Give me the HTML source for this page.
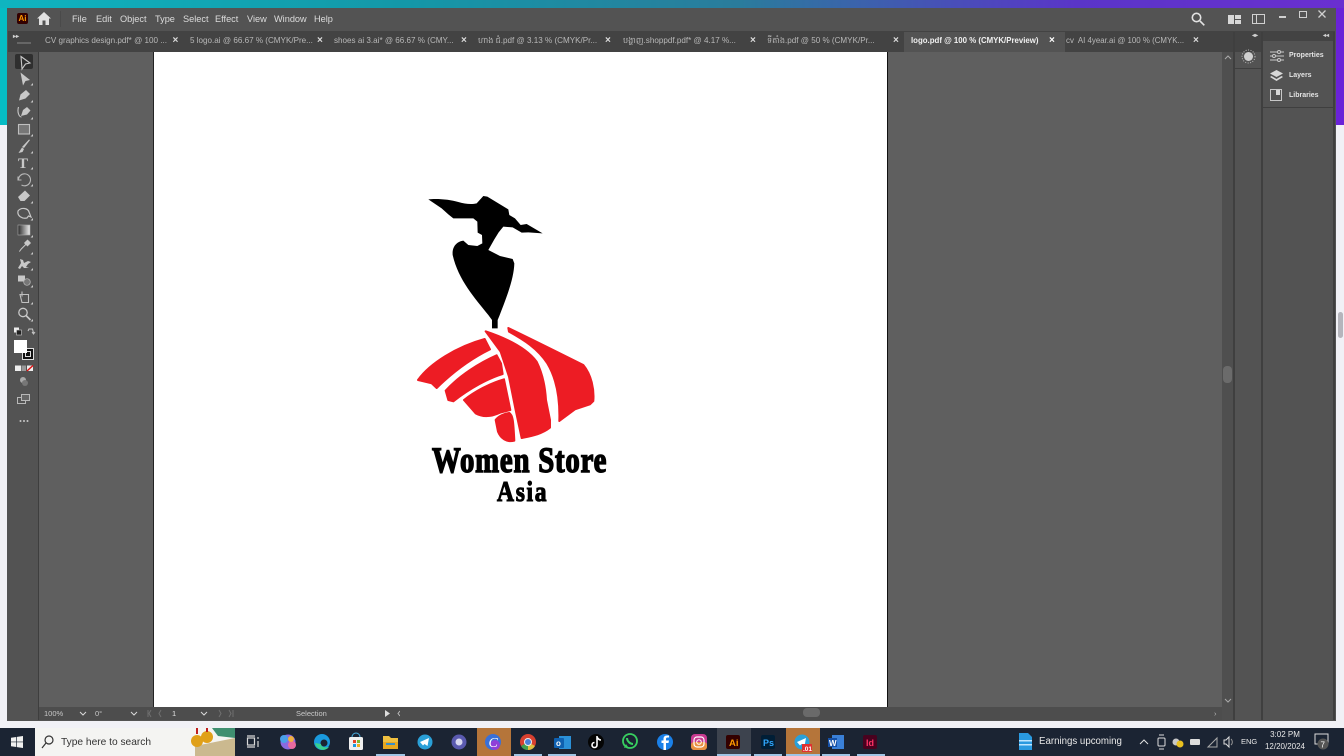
<!DOCTYPE html>
<html><head><meta charset="utf-8">
<style>
html,body{margin:0;padding:0;width:1344px;height:756px;overflow:hidden;background:#f1f1f6;font-family:"Liberation Sans","Noto Sans CJK SC",sans-serif}
.a{position:absolute}
.menu{position:absolute;top:13px;font-size:9.2px;color:#dcdcdc;line-height:12px}
.tab{position:absolute;top:35px;font-size:8.1px;color:#b8b8b8;line-height:12px;white-space:nowrap}
.x{position:absolute;top:35px;font-size:10px;color:#dcdcdc;line-height:12px;font-weight:bold}
.pl{position:absolute;left:1289px;font-size:7px;font-weight:bold;color:#e4e4e4;line-height:10px}
.st{position:absolute;top:709px;font-size:7.5px;color:#c8c8c8;line-height:10px}
</style></head><body>
<div class="a" style="left:0;top:0;width:1344px;height:8px;background:linear-gradient(90deg,#0fb4c0 0,#1498a8 30%,#2a7c9c 55%,#5a35c8 80%,#6a2fd0 100%)"></div>
<div class="a" style="left:0;top:8px;width:8px;height:117px;background:#06bcc4"></div>
<div class="a" style="left:1336px;top:8px;width:8px;height:117px;background:#6a22d8"></div>
<div class="a" style="left:1338px;top:312px;width:5px;height:26px;background:#b5b5bc;border-radius:3px"></div>

<!-- window -->
<div class="a" style="left:7px;top:8px;width:1329px;height:713px;background:#535353"></div>
<div class="a" style="left:8px;top:31px;width:1327px;height:21px;background:#434343"></div>
<div class="a" style="left:904px;top:32px;width:161px;height:20px;background:#535353"></div>
<!-- canvas -->
<div class="a" style="left:39px;top:52px;width:1183px;height:655px;background:#5f5f5f"></div>
<div class="a" style="left:153px;top:52px;width:735px;height:655px;background:#fff;border-left:1px solid #222;border-right:1px solid #111;box-sizing:border-box"></div>
<div class="a" style="left:38px;top:52px;width:1px;height:668px;background:#3e3e3e"></div>
<div class="a" style="left:1222px;top:52px;width:12px;height:668px;background:#4f4f4f"></div>
<div class="a" style="left:1223px;top:366px;width:9px;height:17px;background:#6b6b6b;border-radius:4px"></div>
<div class="a" style="left:1233px;top:32px;width:2px;height:688px;background:#3f3f3f"></div>
<div class="a" style="left:1261px;top:32px;width:2px;height:688px;background:#3f3f3f"></div>
<div class="a" style="left:1235px;top:32px;width:26px;height:9px;background:#434343"></div>
<div class="a" style="left:1263px;top:41px;width:70px;height:65px;background:#535353"></div>
<div class="a" style="left:1263px;top:107px;width:70px;height:1px;background:#3f3f3f"></div>
<div class="a" style="left:1235px;top:68px;width:26px;height:1px;background:#3f3f3f"></div>
<div class="a" style="left:1333px;top:32px;width:2px;height:688px;background:#3f3f3f"></div>

<!-- title bar -->
<div class="a" style="left:17px;top:13px;width:11px;height:11px;background:#330000;border-radius:2px;color:#ff9a00;font-size:8px;font-weight:bold;line-height:11px;text-align:center">Ai</div>
<svg class="a" style="left:37px;top:12px" width="14" height="13" viewBox="0 0 14 13"><path d="M7 0L0 6.500h2V13h3.500V8.500h3V13H12V6.500h2z" fill="#e0e0e0"/></svg>
<div class="a" style="left:60px;top:11px;width:1px;height:16px;background:#4a4a4a"></div>
<div class="menu" style="left:72px">File</div>
<div class="menu" style="left:96px">Edit</div>
<div class="menu" style="left:120px">Object</div>
<div class="menu" style="left:155px">Type</div>
<div class="menu" style="left:183px">Select</div>
<div class="menu" style="left:215px">Effect</div>
<div class="menu" style="left:247px">View</div>
<div class="menu" style="left:274px">Window</div>
<div class="menu" style="left:314px">Help</div>
<svg class="a" style="left:1191px;top:12px" width="14" height="14" viewBox="0 0 14 14" fill="none" stroke="#e2e2e2" stroke-width="1.600"><circle cx="5.500" cy="5.500" r="4.200"/><path d="M9 9l4.300 4.300"/></svg>
<svg class="a" style="left:1228px;top:15px" width="13" height="9"><rect x="0" y="0" width="6" height="9" fill="#d8d8d8"/><rect x="7" y="0" width="6" height="4" fill="#d8d8d8"/><rect x="7" y="5" width="6" height="4" fill="#d8d8d8"/></svg>
<svg class="a" style="left:1252px;top:14px" width="13" height="10" fill="none" stroke="#d0d0d0"><rect x=".5" y=".5" width="12" height="9"/><path d="M4.500 0v10"/></svg>
<div class="a" style="left:1279px;top:16px;width:7px;height:1.500px;background:#cfcfcf"></div>
<div class="a" style="left:1299px;top:11px;width:6px;height:5px;border:1.300px solid #cfcfcf"></div>
<svg class="a" style="left:1318px;top:10px" width="8" height="8" stroke="#cfcfcf" stroke-width="1.300"><path d="M.5.5l7 7M7.500.5l-7 7"/></svg>

<!-- tabs -->
<div class="a" style="left:13px;top:34px;color:#cfcfcf;font-size:6px;line-height:6px;font-weight:bold">▸▸</div>
<div class="tab" style="left:45px">CV graphics design.pdf* @ 100 ...</div><div class="x" style="left:172.500px">×</div>
<div class="tab" style="left:190px">5 logo.ai @ 66.67 % (CMYK/Pre...</div><div class="x" style="left:317px">×</div>
<div class="tab" style="left:334px">shoes ai 3.ai* @ 66.67 % (CMY...</div><div class="x" style="left:461px">×</div>
<div class="tab" style="left:478px">ហាង ជំ.pdf @ 3.13 % (CMYK/Pr...</div><div class="x" style="left:605px">×</div>
<div class="tab" style="left:623px">បង្ហាញ.shoppdf.pdf* @ 4.17 %...</div><div class="x" style="left:750px">×</div>
<div class="tab" style="left:767px;width:120px;overflow:hidden">ទីតាំង.pdf @ 50 % (CMYK/Pr...</div><div class="x" style="left:893px">×</div>
<div class="tab" style="left:911px;color:#f0f0f0;font-weight:bold;font-size:7.850px">logo.pdf @ 100 % (CMYK/Preview)</div><div class="x" style="left:1049px;color:#fff">×</div>
<div class="tab" style="left:1066px;font-size:7.900px">cv&nbsp; AI 4year.ai @ 100 % (CMYK...</div><div class="x" style="left:1193px">×</div>

<!-- tools -->
<div class="a" style="left:15px;top:54px;width:18px;height:15px;background:#2f2f2f;border-radius:2px"></div>
<svg class="a" style="left:0;top:0" width="40" height="430" viewBox="0 0 40 430">
<defs><linearGradient id="gr" x1="0" x2="1"><stop offset="0" stop-color="#2a2a2a"/><stop offset="1" stop-color="#eee"/></linearGradient></defs>
<rect x="17" y="42" width="14" height="2" fill="#666"/>
<g fill="#c8c8c8">
<path d="M21 56.500L30 63L25.500 64L22 69Z" fill="none" stroke="#c8c8c8" stroke-width="1.100"/>
<path d="M20.500 72.500L30 80L25.500 81L23 85.500Z"/>
<path d="M19 100.500L20.500 94.500L26 90L30 94L25.500 98.500Z"/>
<path d="M21 116L23 110L27 107L30.500 110.500L27 114.500Z"/><path d="M18.500 107C17 112 19 117 21.500 117" fill="none" stroke="#c8c8c8" stroke-width="1.100"/>
<rect x="18.500" y="124.500" width="11" height="9.500" fill="#777" stroke="#c0c0c0" stroke-width="1.100"/>
<path d="M30 140L24 148L22 147L29 139.500ZM22 147.500L24 149L22.500 152L18.500 153Z"/>
<text x="18" y="168" font-family="Liberation Serif,serif" font-size="15" font-weight="bold">T</text>
<path d="M18 176.500v3.500h3.500M18.500 180a6 6 0 1 1 3 5" fill="none" stroke="#b8b8b8" stroke-width="1.100"/>
<path d="M18 197L25 190.500L30 195.500L24.500 201L20.500 201Z"/>
<path d="M18 211c3-4 10-3 11 1l2 5-2.500-1-1.500 2c-5 1-10-2-9-7z" fill="none" stroke="#c8c8c8" stroke-width="1.200"/>
<rect x="18" y="225" width="12" height="10" fill="url(#gr)" stroke="#aaa" stroke-width=".6"/>
<path d="M29.500 241.500l-8 8-1.500 2 -1 .5.500-1.500 1.500-2 8-8z"/><rect x="25" y="240.500" width="5" height="5" transform="rotate(45 27.500 243)"/>
<path d="M18 268l3-5-1-4 3 1 1 3 4-2 3 1-3 2-2 3 3 1h-5l-2-2-2 3z"/>
<rect x="18" y="275.500" width="7" height="6"/><circle cx="27" cy="282" r="3.300" fill="#777" stroke="#bbb" stroke-width=".7"/>
<path d="M20 294.500h8.500v8H22zM22 291.500v5" fill="none" stroke="#c0c0c0" stroke-width="1.100"/>
<circle cx="23" cy="312.500" r="4.200" fill="none" stroke="#c8c8c8" stroke-width="1.300"/><path d="M26 315.500l4.500 4.500" stroke="#c8c8c8" stroke-width="1.700"/>
<rect x="14" y="327.500" width="5" height="5" fill="#eee"/><rect x="16.500" y="330" width="5" height="5" fill="#222" stroke="#ccc" stroke-width=".6"/>
<path d="M28.500 329h4l1 4M35 332l-1.500 2-1.500-2M28 331l1-2" fill="none" stroke="#c8c8c8" stroke-width="1"/>
<rect x="15" y="365.500" width="6" height="5.500" fill="#eee"/><rect x="21.500" y="365.500" width="4.500" height="5.500" fill="#999"/>
<rect x="27" y="365.500" width="6" height="5.500" fill="#eee"/><path d="M27 371l6-5.500" stroke="#e01010" stroke-width="1.400"/>
<circle cx="23" cy="380" r="3" fill="#aaa"/><circle cx="25" cy="383" r="3" fill="#777"/>
<rect x="17.500" y="397.500" width="8" height="6" fill="none" stroke="#b8b8b8"/><rect x="21.500" y="394.500" width="8" height="6" fill="#666" stroke="#b8b8b8"/>
<circle cx="20.500" cy="421" r="1"/><circle cx="24" cy="421" r="1"/><circle cx="27.500" cy="421" r="1"/>
<path d="M33 83v2.500h-2.500zM33 100v2.500h-2.500zM33 117v2.500h-2.500zM33 134v2.500h-2.500zM33 151v2.500h-2.500zM33 167v2.500h-2.500zM33 184v2.500h-2.500zM33 201v2.500h-2.500zM33 218v2.500h-2.500zM33 235v2.500h-2.500zM33 252v2.500h-2.500zM33 268v2.500h-2.500zM33 285v2.500h-2.500zM33 302v2.500h-2.500zM33 319v2.500h-2.500z"/>
</g>
</svg>
<div class="a" style="left:22px;top:348px;width:12px;height:12px;background:#111;border:1px solid #ddd;box-sizing:border-box"></div>
<div class="a" style="left:25px;top:351px;width:6px;height:6px;border:1px solid #ddd;box-sizing:border-box"></div>
<div class="a" style="left:14px;top:340px;width:13px;height:13px;background:#fff"></div>

<!-- right dock -->
<svg class="a" style="left:1241px;top:49px" width="15" height="15"><circle cx="7.500" cy="7.500" r="4.500" fill="#d0d0d0"/><circle cx="7.500" cy="7.500" r="6.500" fill="none" stroke="#bbb" stroke-dasharray="1 1.500"/></svg>
<div class="a" style="left:1252px;top:33px;color:#cfcfcf;font-size:6px;line-height:6px;font-weight:bold">◂▸</div>
<div class="a" style="left:1323px;top:33px;color:#cfcfcf;font-size:6px;line-height:6px;font-weight:bold">◂◂</div>
<svg class="a" style="left:1270px;top:50px" width="14" height="12" stroke="#c8c8c8" fill="none"><path d="M0 2h14M0 6h14M0 10h14"/><circle cx="9" cy="2" r="1.500" fill="#535353"/><circle cx="4" cy="6" r="1.500" fill="#535353"/><circle cx="9" cy="10" r="1.500" fill="#535353"/></svg>
<svg class="a" style="left:1270px;top:70px" width="13" height="12" fill="#d8d8d8"><path d="M6.500 0l6.500 3.500-6.500 3.500L0 3.500z"/><path d="M1.500 6L0 7l6.500 4L13 7l-1.500-1-5 3z"/></svg>
<svg class="a" style="left:1270px;top:89px" width="13" height="12" fill="none" stroke="#c8c8c8"><rect x=".5" y=".5" width="11" height="11"/><rect x="6" y="1" width="4" height="5" fill="#d8d8d8" stroke="none"/></svg>
<div class="pl" style="top:51px">Properties</div>
<div class="pl" style="top:71px;">Layers</div>
<div class="pl" style="top:91px;">Libraries</div>
<svg class="a" style="left:1224px;top:55px" width="8" height="6" fill="none" stroke="#aaa"><path d="M1 4l3-3 3 3"/></svg>
<svg class="a" style="left:1224px;top:698px" width="8" height="6" fill="none" stroke="#aaa"><path d="M1 1l3 3 3-3"/></svg>

<!-- logo -->
<svg class="a" style="left:0;top:0" width="1344" height="756">
<g transform="translate(400,180) scale(.3333)"><path fill="#000" d="M85,58C110,55 150,58 175,66C195,72 215,74 230,70L250,48L262,50L325,88L328,105L345,115L362,135L380,132L428,160L385,157L365,158L338,142L310,140L296,157L283,178L265,210L300,228L338,237L343,250C342,290 325,340 298,408L293,420L293,445L276,445L276,420L265,405C225,355 175,300 158,225C156,200 170,185 190,182L205,195L232,198L247,190L246,165L233,158L232,125L220,115L160,115L145,103L125,85Z"/></g>
<g transform="translate(400,320) scale(.3333)" fill="#ed1c24" stroke="#ed1c24" stroke-width="6" stroke-linejoin="round">
<path d="M54,180C90,130 170,80 254,57L270,88C215,115 165,150 110,204L95,190Z"/>
<path d="M137,212C180,165 240,128 290,106L303,130L308,162C265,175 210,205 160,244L145,240Z"/>
<path d="M192,240C225,214 270,190 312,178L331,270L300,278C270,292 245,290 227,280Z"/>
<path d="M287,300C295,288 315,280 328,279C338,285 340,300 343,362C320,368 302,355 294,335Z"/>
<path d="M257,34C320,55 380,85 410,125C425,155 435,190 438,240L450,300L450,323C425,343 395,348 365,354L347,270L327,170L302,95Z"/>
<path d="M325,24C400,60 490,105 550,135C575,165 583,210 580,243L570,253L525,268L478,303C480,240 472,180 442,130C412,85 372,60 327,35Z"/>
</g>
<text transform="translate(432,472) scale(.8,1)" font-family="Liberation Serif,serif" font-weight="bold" font-size="36" textLength="218" lengthAdjust="spacing" fill="#000" stroke="#000" stroke-width="1.500">Women Store</text>
<text transform="translate(497,501) scale(.84,1)" font-family="Liberation Serif,serif" font-weight="bold" font-size="28" textLength="59" lengthAdjust="spacing" fill="#000" stroke="#000" stroke-width="1.100">Asia</text>
</svg>

<!-- status bar -->
<div class="a" style="left:39px;top:707px;width:1183px;height:13px;background:#4d4d4d"></div>
<div class="a" style="left:803px;top:708px;width:17px;height:9px;background:#6a6a6a;border-radius:4px"></div>
<div class="st" style="left:44px">100%</div>
<div class="st" style="left:95px">0°</div>
<div class="st" style="left:172px;color:#e0e0e0">1</div>
<div class="st" style="left:296px">Selection</div>
<svg class="a" style="left:0;top:707px" width="400" height="13" fill="none" stroke="#d8d8d8"><path d="M80 5l3 3 3-3M131 5l3 3 3-3M201 5l3 3 3-3"/><g stroke="#707070"><path d="M148 3v7M151 3l-2 3.500 2 3.500M161 3l-2 3.500 2 3.500M219 3l2 3.500-2 3.500M229 3l2 3.500-2 3.500M233 3v7"/></g><path d="M385 3l5 3.500-5 3.500z" fill="#ddd" stroke="none"/><path d="M400 4l-2 2.500 2 2.500" stroke="#bbb"/></svg>
<div class="st" style="left:1214px;color:#bbb">›</div>

<!-- taskbar -->
<div class="a" style="left:0;top:728px;width:1344px;height:28px;background:#1b2433"></div>
<svg class="a" style="left:11px;top:736px" width="12" height="12" fill="#f0f0f0"><path d="M0 1.700L5.300 1v4.600H0zM6 .9L12 0v5.600H6zM0 6.300h5.300V11L0 10.300zM6 6.300h6V12l-6-.9z"/></svg>
<div class="a" style="left:35px;top:728px;width:200px;height:28px;background:#f4f4f2"></div>
<svg class="a" style="left:41px;top:735px" width="13" height="14" fill="none" stroke="#333" stroke-width="1.200"><circle cx="8" cy="5" r="4"/><path d="M5 8l-4 5"/></svg>
<div class="a" style="left:61px;top:735px;font-size:10.200px;color:#333;line-height:15px">Type here to search</div>
<svg class="a" style="left:190px;top:728px" width="45" height="28"><path d="M5 18l40-8v18H5z" fill="#cbb98f"/><path d="M22 0h23v10L28 8z" fill="#3f8f70"/><circle cx="7" cy="13" r="6" fill="#e0a018"/><circle cx="17" cy="9" r="6" fill="#e0a018"/><rect x="6" y="0" width="2" height="6" fill="#c02020"/><rect x="16" y="0" width="2" height="4" fill="#c02020"/></svg>

<div class="a" style="left:477px;top:728px;width:34px;height:28px;background:#b5753a"></div>
<div class="a" style="left:717px;top:728px;width:34px;height:28px;background:#3d434e"></div>
<div class="a" style="left:786px;top:728px;width:34px;height:28px;background:#b5753a"></div>
<svg class="a" style="left:0;top:728px" width="1344" height="28">
<g fill="#9fc4e4">
<rect x="376" y="26" width="29" height="2"/><rect x="514" y="26" width="28" height="2"/><rect x="548" y="26" width="28" height="2"/><rect x="717" y="26" width="34" height="2"/><rect x="754" y="26" width="28" height="2"/><rect x="786" y="26" width="34" height="2"/><rect x="822" y="26" width="28" height="2"/><rect x="857" y="26" width="28" height="2"/>
</g>
<g fill="none" stroke="#d8d8d8" stroke-width="1.200"><rect x="247.500" y="10" width="7" height="7"/><path d="M247 8h8M247 19h8M258 9v2M258 13v6"/></g>
<circle cx="288" cy="14" r="7.500" fill="#8a6ae0"/><circle cx="284" cy="11" r="4" fill="#4aa0e8"/><circle cx="292" cy="17" r="4" fill="#e86aa0"/><circle cx="291" cy="11" r="3" fill="#f0b040"/>
<circle cx="322" cy="14" r="8" fill="#1a9adf"/><circle cx="324" cy="15" r="3.500" fill="#1b2433"/><path d="M315 15a8 8 0 0 0 14 4c-4 1-8 0-8-3z" fill="#38d090"/>
<rect x="349" y="9" width="14" height="13" rx="1.500" fill="#f0f0f0"/><rect x="353" y="12" width="3" height="3" fill="#e8442a"/><rect x="357" y="12" width="3" height="3" fill="#7cb82f"/><rect x="353" y="16" width="3" height="3" fill="#1a9adf"/><rect x="357" y="16" width="3" height="3" fill="#f2b01e"/><path d="M352 9a4 4 0 0 1 8 0" fill="none" stroke="#4ab0e0"/>
<path d="M383 8h6l2 2h7v11h-15z" fill="#f0c040"/><rect x="383" y="14" width="15" height="7" fill="#e8a820"/><rect x="386" y="15" width="9" height="2" fill="#3a90c8"/>
<circle cx="425" cy="14" r="7.500" fill="#2aa0d8"/><path d="M420 14l9-4-1.500 8-3-2-1.500 1.500z" fill="#fff"/>
<circle cx="459" cy="14" r="7.500" fill="#5a5ab0"/><circle cx="459" cy="14" r="3.500" fill="#d8d8f0"/>
<circle cx="493" cy="14" r="8" fill="#3a70d8"/><circle cx="495" cy="17" r="5" fill="#9040d8"/><text x="488.500" y="19" font-family="Liberation Serif,serif" font-style="italic" font-size="14" fill="#fff">C</text>
<circle cx="528" cy="14" r="8" fill="#d84030"/><path d="M528 14l-7 4a8 8 0 0 0 7 4z" fill="#40a050"/><path d="M528 14l7 4a8 8 0 0 1-7 4z" fill="#e0c040"/><circle cx="528" cy="14" r="3.500" fill="#4a80d8" stroke="#eee"/>
<rect x="559" y="8" width="12" height="13" fill="#2a90d8"/><rect x="554" y="10" width="10" height="10" rx="1" fill="#0f60b0"/><text x="556" y="18" font-size="8" font-weight="bold" fill="#fff">o</text>
<circle cx="596" cy="14" r="8" fill="#050505"/><path d="M597 8v9a2.500 2.500 0 1 1-2.500-2.500M597 9c1 2 2 3 4 3" fill="none" stroke="#fff" stroke-width="1.600"/>
<circle cx="630" cy="13" r="7" fill="none" stroke="#38d060" stroke-width="1.800"/><path d="M624 20l2-4 2 3z" fill="#38d060"/><path d="M627 10c0 3 3 6 6 6" fill="none" stroke="#38d060" stroke-width="2"/>
<circle cx="665" cy="14" r="8" fill="#1a80e8"/><path d="M666 22v-7h2.500l.5-2.500h-3v-1.500c0-1 .5-1.500 1.500-1.500h1.500V7.500h-2c-2.500 0-3.500 1.500-3.500 3.500v1.500h-2V15h2v7z" fill="#fff"/>
<rect x="691" y="6" width="16" height="16" rx="4" fill="#c83a90"/><rect x="691" y="14" width="16" height="8" rx="3" fill="#e89040"/><rect x="694" y="9" width="10" height="10" rx="3" fill="none" stroke="#fff" stroke-width="1.200"/><circle cx="699" cy="14" r="2.300" fill="none" stroke="#fff"/>
<rect x="726" y="7" width="14" height="14" rx="2" fill="#330000"/><text x="729" y="18" font-size="9.500" font-weight="bold" fill="#ff9a00">Ai</text>
<rect x="761" y="7" width="14" height="14" rx="2" fill="#001e36"/><text x="763" y="18" font-size="9" font-weight="bold" fill="#31a8ff">Ps</text>
<circle cx="802" cy="14" r="7.500" fill="#2aa0d8"/><path d="M797 14l9-4-1.500 8-3-2-1.500 1.500z" fill="#fff"/><rect x="802" y="16" width="10" height="8" fill="#e03030"/><text x="803" y="23" font-size="6.500" font-weight="bold" fill="#fff">.01</text>
<rect x="832" y="7" width="12" height="14" fill="#3a80d8"/><rect x="828" y="10" width="9" height="9" fill="#1450a8"/><text x="829" y="18" font-size="8" font-weight="bold" fill="#fff">W</text>
<rect x="863" y="7" width="14" height="14" rx="2" fill="#49021f"/><text x="866" y="18" font-size="9" font-weight="bold" fill="#ff3366">Id</text>
<path d="M1019 5h9l4 4v13h-13z" fill="#2a9ae0"/><rect x="1019" y="16" width="13" height="1.500" fill="#bfe6ff"/><rect x="1019" y="12" width="13" height="1.500" fill="#bfe6ff"/>
<path d="M1140 16l4-4 4 4" fill="none" stroke="#e0e0e0"/>
<rect x="1158" y="10" width="7" height="8" rx="1" fill="none" stroke="#ddd"/><path d="M1159 7h5M1159 21h5" stroke="#ddd"/>
<circle cx="1176" cy="14" r="3.500" fill="#c8c8c8"/><circle cx="1180" cy="16" r="3.500" fill="#e8c020"/>
<rect x="1190" y="11" width="10" height="6" rx="1" fill="#ddd"/>
<path d="M1208 19l9-9v9z" fill="none" stroke="#aaa"/>
<path d="M1224 12h2l3-3v10l-3-3h-2z" fill="none" stroke="#ddd"/><path d="M1231 11a4 4 0 0 1 0 6" fill="none" stroke="#999"/>
<path d="M1315 6h13v10h-4v3l-3-3h-6z" fill="none" stroke="#ddd"/><circle cx="1323" cy="16" r="5.500" fill="#555"/><text x="1320.500" y="19.500" font-size="8" fill="#fff">7</text>
</svg>
<div class="a" style="left:1039px;top:735px;font-size:9.700px;color:#e8e8e8;line-height:14px">Earnings upcoming</div>
<div class="a" style="left:1241px;top:736px;font-size:7.500px;color:#e8e8e8;line-height:12px">ENG</div>
<div class="a" style="left:1262px;top:729px;width:46px;font-size:8px;color:#e8e8e8;line-height:12px;text-align:center">3:02 PM<br>12/20/2024</div>
</body></html>
